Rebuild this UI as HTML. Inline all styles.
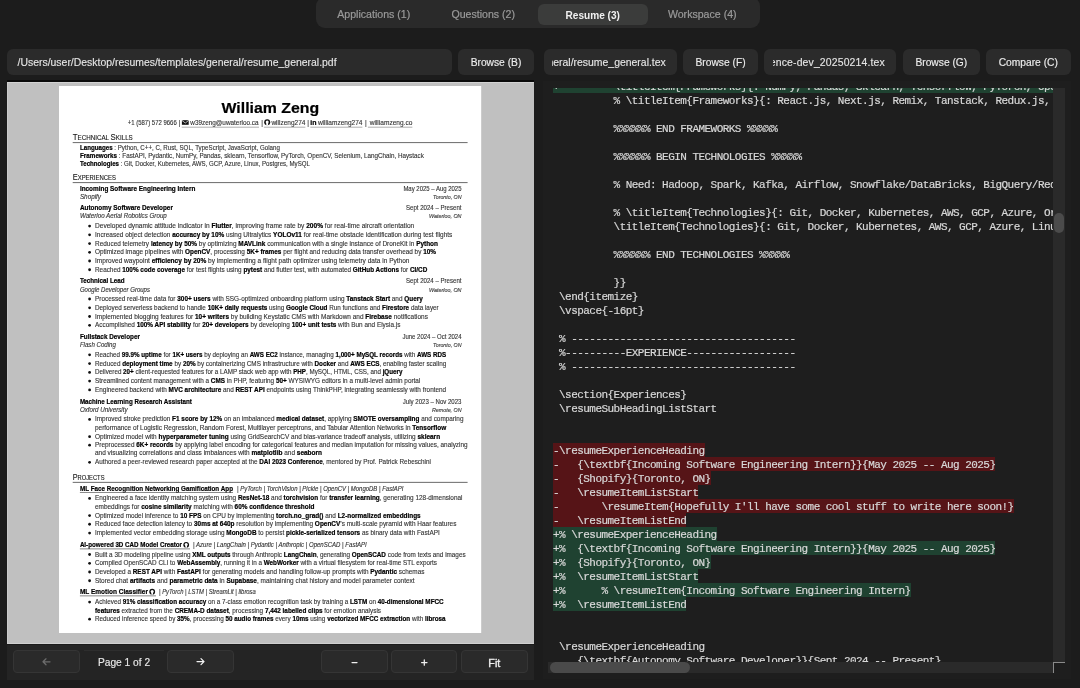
<!DOCTYPE html>
<html><head><meta charset="utf-8">
<style>
*{box-sizing:border-box;margin:0;padding:0}
html,body{width:1080px;height:688px;overflow:hidden;background:#1c1c1c;font-family:'Liberation Sans',sans-serif}
body>div{will-change:transform}
.abs{position:absolute}
#tabs{position:absolute;left:316px;top:-3.5px;width:444px;height:31px;background:#2a2a2a;border-radius:9px}
.tab{position:absolute;top:6.6px;height:21.8px;line-height:21.8px;width:109.5px;text-align:center;font-size:10.6px;color:#9a9a9a;-webkit-text-stroke:0.2px #9a9a9a}
.tab span{position:relative;top:0.6px}
.tab.act{background:#3b3c3b;color:#f0f0f0;border-radius:6px;font-weight:bold;font-size:10.1px;-webkit-text-stroke:0}
.tab.act span{top:1px}
.inp{position:absolute;top:49px;height:26px;background:#2b2b2b;border-radius:6px;overflow:hidden}
.clip{position:absolute;top:0;bottom:0;overflow:hidden}
.inp span{position:absolute;top:0.75px;line-height:26px;font-size:10.45px;color:#e6e6e6;white-space:nowrap;-webkit-text-stroke:0.12px #e6e6e6}
.btn{position:absolute;top:49px;height:26px;line-height:27.5px;background:#2b2b2b;border-radius:6px;text-align:center;font-size:10.25px;color:#ececec;-webkit-text-stroke:0.15px #ececec}
#lp{position:absolute;left:7px;top:80px;width:527px;height:2px;background:#0a0a0a}
#canvas{position:absolute;left:7px;top:81.6px;width:527px;height:562px;background:#c0c0c0;overflow:hidden;border-top:1.5px solid #d2d2d2;border-left:1px solid #cbcbcb;border-bottom:1px solid #cfcfcf}
#ctrl{position:absolute;left:7px;top:643.5px;width:527px;height:36px;background:#242424;border-top:1px solid #1a1a1a}
.cb{position:absolute;top:650.2px;height:23px;line-height:22px;border:1px solid #353535;background:#2a2a2a;border-radius:4px;text-align:center;color:#eee;font-size:10.5px}
#pglabel{position:absolute;left:83.75px;top:650px;width:80px;height:23px;line-height:23px;border-top:1px solid #2e2e2e;text-align:center;color:#e8e8e8;font-size:10.2px;-webkit-text-stroke:0.15px #e8e8e8}
#ed{position:absolute;left:543px;top:81px;width:527.6px;height:598.4px;background:#1e1e1e}
#view{position:absolute;left:553px;top:88px;width:501px;height:574px;overflow:hidden;will-change:transform}
#code{position:absolute;left:0;top:-9px;font-family:'Liberation Mono',monospace;font-size:11px;letter-spacing:-0.54px;line-height:14px;color:#d8d8d8;white-space:pre;-webkit-text-stroke:0.2px #d8d8d8}
.ln span.t{position:relative;top:0.5px}
.ln{height:14px;white-space:pre}
.add{background:#1f4231;display:inline-block;height:14px}
.del{background:#561417;display:inline-block;height:14px}
#vtrack{position:absolute;left:1053px;top:88px;width:12px;height:574px;background:#2a2a2a}
#vthumb{position:absolute;left:1054px;top:213px;width:10px;height:20px;background:#4b4b4b;border-radius:5px}
#htrack{position:absolute;left:548px;top:662px;width:505px;height:11px;background:#2a2a2a}
#hthumb{position:absolute;left:550px;top:662px;width:140px;height:11px;background:#4a4a4a;border-radius:5.5px}
#corner{position:absolute;left:1053px;top:662px;width:12px;height:11px;background:#1e1e1e;border-left:1.5px solid #8a8a8a;border-top:1.5px solid #8a8a8a}
svg text{font-family:'Liberation Sans',sans-serif;fill:#333;stroke:#333;stroke-width:0.12}
svg .b{font-weight:bold;fill:#000;stroke:#000;stroke-width:0.2}
svg .i{font-style:italic}
svg .h{fill:#111}
</style></head><body>
<div id="tabs">
 <div class="tab" style="left:3px"><span>Applications (1)</span></div>
 <div class="tab" style="left:112.5px"><span>Questions (2)</span></div>
 <div class="tab act" style="left:222px"><span>Resume (3)</span></div>
 <div class="tab" style="left:331.5px"><span>Workspace (4)</span></div>
</div>
<div class="inp" style="left:7px;width:445px"><span style="left:10.5px">/Users/user/Desktop/resumes/templates/general/resume_general.pdf</span></div>
<div class="btn" style="left:458px;width:76px">Browse (B)</div>
<div class="inp" style="left:543.6px;width:132.8px"><div class="clip" style="left:8.1px;right:11px"><span style="right:0">/Users/user/Desktop/resumes/templates/general/resume_general.tex</span></div></div>
<div class="btn" style="left:683px;width:75px">Browse (F)</div>
<div class="inp" style="left:764.4px;width:132.3px"><div class="clip" style="left:8.6px;right:11.5px"><span style="right:0;letter-spacing:0.14px">/Users/user/Desktop/resumes/versions/experience-dev_20250214.tex</span></div></div>
<div class="btn" style="left:903px;width:76.7px">Browse (G)</div>
<div class="btn" style="left:986px;width:84.5px">Compare (C)</div>

<div id="lp"></div>
<div id="canvas"></div>
<svg class="abs" style="left:0;top:0;will-change:transform" width="1080" height="688">
<rect x="59" y="86" width="422.2" height="547" fill="#fff"/>
<text x="221.5" y="113.2" font-size="15.2" textLength="97.6" lengthAdjust="spacingAndGlyphs" class="b">William Zeng</text>
<text x="127.80" y="124.70" font-size="6.6" textLength="48.90" lengthAdjust="spacingAndGlyphs">+1 (587) 572 9666</text>
<text x="178.7" y="124.9" font-size="6.6" fill="#999" stroke="none">|</text>
<text x="190.30" y="124.70" font-size="6.6" textLength="68.30" lengthAdjust="spacingAndGlyphs">w39zeng@uwaterloo.ca</text>
<text x="261.2" y="124.9" font-size="6.6" fill="#999" stroke="none">|</text>
<text x="271.40" y="124.70" font-size="6.6" textLength="34.00" lengthAdjust="spacingAndGlyphs">willzeng274</text>
<text x="307.3" y="124.9" font-size="6.6" fill="#999" stroke="none">|</text>
<text x="317.90" y="124.70" font-size="6.6" textLength="44.50" lengthAdjust="spacingAndGlyphs">williamzeng274</text>
<text x="365.0" y="124.9" font-size="6.6" fill="#999" stroke="none">|</text>
<text x="369.70" y="124.70" font-size="6.6" textLength="42.70" lengthAdjust="spacingAndGlyphs">williamzeng.co</text>
<line x1="181.7" y1="127.20" x2="259.0" y2="127.20" stroke="#777" stroke-width="0.6"/>
<line x1="263.9" y1="127.20" x2="305.4" y2="127.20" stroke="#777" stroke-width="0.6"/>
<line x1="310.3" y1="127.20" x2="362.4" y2="127.20" stroke="#777" stroke-width="0.6"/>
<line x1="367.9" y1="127.20" x2="412.4" y2="127.20" stroke="#777" stroke-width="0.6"/>
<rect x="181.9" y="120.2" width="6.8" height="4.6" fill="#111"/><path d="M181.9 120.4 L185.3 123 L188.7 120.4" stroke="#fff" stroke-width="0.7" fill="none"/>
<circle cx="267.2" cy="122.3" r="3.0" fill="#111"/><circle cx="267.2" cy="122.0" r="1.5" fill="#fff"/><rect x="266.3" y="123" width="1.8" height="2.4" fill="#fff"/>
<text x="310.3" y="124.8" font-size="6.6" class="b" textLength="6.2" lengthAdjust="spacingAndGlyphs">in</text>
<text x="72.7" y="139.70" textLength="60.10" lengthAdjust="spacingAndGlyphs" class="h"><tspan font-size="8.2">T</tspan><tspan font-size="6.5">ECHNICAL</tspan><tspan font-size="6.5"> </tspan><tspan font-size="8.2">S</tspan><tspan font-size="6.5">KILLS</tspan></text>
<line x1="72.7" y1="142.60" x2="467.6" y2="142.60" stroke="#6a6a6a" stroke-width="1.0"/>
<text x="80.00" y="149.90" font-size="6.7" textLength="199.90" lengthAdjust="spacingAndGlyphs"><tspan class="b">Languages</tspan> : Python, C++, C, Rust, SQL, TypeScript, JavaScript, Golang</text>
<text x="80.00" y="157.90" font-size="6.7" textLength="343.80" lengthAdjust="spacingAndGlyphs"><tspan class="b">Frameworks</tspan> : FastAPI, Pydantic, NumPy, Pandas, sklearn, Tensorflow, PyTorch, OpenCV, Selenium, LangChain, Haystack</text>
<text x="80.00" y="165.90" font-size="6.7" textLength="229.90" lengthAdjust="spacingAndGlyphs"><tspan class="b">Technologies</tspan> : Git, Docker, Kubernetes, AWS, GCP, Azure, Linux, Postgres, MySQL</text>
<text x="72.7" y="179.90" textLength="43.30" lengthAdjust="spacingAndGlyphs" class="h"><tspan font-size="8.2">E</tspan><tspan font-size="6.5">XPERIENCES</tspan></text>
<line x1="72.7" y1="182.60" x2="467.6" y2="182.60" stroke="#6a6a6a" stroke-width="1.0"/>
<text x="79.90" y="190.80" font-size="6.9" textLength="115.40" lengthAdjust="spacingAndGlyphs"><tspan class="b">Incoming Software Engineering Intern</tspan></text>
<text x="403.40" y="190.80" font-size="6.5" textLength="58.10" lengthAdjust="spacingAndGlyphs">May 2025 – Aug 2025</text>
<text x="79.90" y="198.91" font-size="6.6" textLength="21.10" lengthAdjust="spacingAndGlyphs"><tspan class="i">Shopify</tspan></text>
<text x="433.00" y="198.91" font-size="6.0" textLength="28.50" lengthAdjust="spacingAndGlyphs"><tspan class="i">Toronto, ON</tspan></text>
<text x="79.90" y="210.13" font-size="6.9" textLength="93.00" lengthAdjust="spacingAndGlyphs"><tspan class="b">Autonomy Software Developer</tspan></text>
<text x="406.00" y="210.13" font-size="6.5" textLength="55.50" lengthAdjust="spacingAndGlyphs">Sept 2024 – Present</text>
<text x="79.90" y="217.84" font-size="6.6" textLength="86.90" lengthAdjust="spacingAndGlyphs"><tspan class="i">Waterloo Aerial Robotics Group</tspan></text>
<text x="429.00" y="217.84" font-size="6.0" textLength="32.50" lengthAdjust="spacingAndGlyphs"><tspan class="i">Waterloo, ON</tspan></text>
<circle cx="89.6" cy="226.06" r="1.4" fill="#111" stroke="none"/>
<text x="95.00" y="228.06" font-size="6.7" textLength="319.20" lengthAdjust="spacingAndGlyphs">Developed dynamic attitude indicator in <tspan class="b">Flutter</tspan>, improving frame rate by <tspan class="b">200%</tspan> for real-time aircraft orientation</text>
<circle cx="89.6" cy="234.87" r="1.4" fill="#111" stroke="none"/>
<text x="95.00" y="236.88" font-size="6.7" textLength="357.30" lengthAdjust="spacingAndGlyphs">Increased object detection <tspan class="b">accuracy by 10%</tspan> using Ultralytics <tspan class="b">YOLOv11</tspan> for real-time obstacle identification during test flights</text>
<circle cx="89.6" cy="243.59" r="1.4" fill="#111" stroke="none"/>
<text x="95.00" y="245.59" font-size="6.7" textLength="343.00" lengthAdjust="spacingAndGlyphs">Reduced telemetry <tspan class="b">latency by 50%</tspan> by optimizing <tspan class="b">MAVLink</tspan> communication with a single instance of DroneKit in <tspan class="b">Python</tspan></text>
<circle cx="89.6" cy="252.30" r="1.4" fill="#111" stroke="none"/>
<text x="95.00" y="254.30" font-size="6.7" textLength="341.00" lengthAdjust="spacingAndGlyphs">Optimized image pipelines with <tspan class="b">OpenCV</tspan>, processing <tspan class="b">5K+ frames</tspan> per flight and reducing data transfer overhead by <tspan class="b">10%</tspan></text>
<circle cx="89.6" cy="261.01" r="1.4" fill="#111" stroke="none"/>
<text x="95.00" y="263.02" font-size="6.7" textLength="314.50" lengthAdjust="spacingAndGlyphs">Improved waypoint <tspan class="b">efficiency by 20%</tspan> by implementing a flight path optimizer using telemetry data in Python</text>
<circle cx="89.6" cy="269.73" r="1.4" fill="#111" stroke="none"/>
<text x="95.00" y="271.73" font-size="6.7" textLength="332.30" lengthAdjust="spacingAndGlyphs">Reached <tspan class="b">100% code coverage</tspan> for test flights using <tspan class="b">pytest</tspan> and flutter test, with automated <tspan class="b">GitHub Actions</tspan> for <tspan class="b">CI/CD</tspan></text>
<text x="79.90" y="283.05" font-size="6.9" textLength="44.70" lengthAdjust="spacingAndGlyphs"><tspan class="b">Technical Lead</tspan></text>
<text x="406.00" y="283.05" font-size="6.5" textLength="55.50" lengthAdjust="spacingAndGlyphs">Sept 2024 – Present</text>
<text x="79.90" y="292.47" font-size="6.6" textLength="70.10" lengthAdjust="spacingAndGlyphs"><tspan class="i">Google Developer Groups</tspan></text>
<text x="429.00" y="292.47" font-size="6.0" textLength="32.50" lengthAdjust="spacingAndGlyphs"><tspan class="i">Waterloo, ON</tspan></text>
<circle cx="89.6" cy="298.98" r="1.4" fill="#111" stroke="none"/>
<text x="95.00" y="300.98" font-size="6.7" textLength="327.80" lengthAdjust="spacingAndGlyphs">Processed real-time data for <tspan class="b">300+ users</tspan> with SSG-optimized onboarding platform using <tspan class="b">Tanstack Start</tspan> and <tspan class="b">Query</tspan></text>
<circle cx="89.6" cy="307.79" r="1.4" fill="#111" stroke="none"/>
<text x="95.00" y="309.79" font-size="6.7" textLength="343.70" lengthAdjust="spacingAndGlyphs">Deployed serverless backend to handle <tspan class="b">10K+ daily requests</tspan> using <tspan class="b">Google Cloud</tspan> Run functions and <tspan class="b">Firestore</tspan> data layer</text>
<circle cx="89.6" cy="316.51" r="1.4" fill="#111" stroke="none"/>
<text x="95.00" y="318.51" font-size="6.7" textLength="332.90" lengthAdjust="spacingAndGlyphs">Implemented blogging features for <tspan class="b">10+ writers</tspan> by building Keystatic CMS with Markdown and <tspan class="b">Firebase</tspan> notifications</text>
<circle cx="89.6" cy="325.32" r="1.4" fill="#111" stroke="none"/>
<text x="95.00" y="327.32" font-size="6.7" textLength="305.40" lengthAdjust="spacingAndGlyphs">Accomplished <tspan class="b">100% API stability</tspan> for <tspan class="b">20+ developers</tspan> by developing <tspan class="b">100+ unit tests</tspan> with Bun and Elysia.js</text>
<text x="79.90" y="339.14" font-size="6.9" textLength="60.00" lengthAdjust="spacingAndGlyphs"><tspan class="b">Fullstack Developer</tspan></text>
<text x="402.40" y="339.14" font-size="6.5" textLength="59.10" lengthAdjust="spacingAndGlyphs">June 2024 – Oct 2024</text>
<text x="79.90" y="346.95" font-size="6.6" textLength="35.90" lengthAdjust="spacingAndGlyphs"><tspan class="i">Flash Coding</tspan></text>
<text x="433.00" y="346.95" font-size="6.0" textLength="28.50" lengthAdjust="spacingAndGlyphs"><tspan class="i">Toronto, ON</tspan></text>
<circle cx="89.6" cy="354.87" r="1.4" fill="#111" stroke="none"/>
<text x="95.00" y="356.87" font-size="6.7" textLength="351.20" lengthAdjust="spacingAndGlyphs">Reached <tspan class="b">99.9% uptime</tspan> for <tspan class="b">1K+ users</tspan> by deploying an <tspan class="b">AWS EC2</tspan> instance, managing <tspan class="b">1,000+ MySQL records</tspan> with <tspan class="b">AWS RDS</tspan></text>
<circle cx="89.6" cy="363.58" r="1.4" fill="#111" stroke="none"/>
<text x="95.00" y="365.58" font-size="6.7" textLength="351.20" lengthAdjust="spacingAndGlyphs">Reduced <tspan class="b">deployment time</tspan> by <tspan class="b">20%</tspan> by containerizing CMS infrastructure with <tspan class="b">Docker</tspan> and <tspan class="b">AWS ECS</tspan>, enabling faster scaling</text>
<circle cx="89.6" cy="372.40" r="1.4" fill="#111" stroke="none"/>
<text x="95.00" y="374.40" font-size="6.7" textLength="307.40" lengthAdjust="spacingAndGlyphs">Delivered <tspan class="b">20+</tspan> client-requested features for a LAMP stack web app with <tspan class="b">PHP</tspan>, MySQL, HTML, CSS, and <tspan class="b">jQuery</tspan></text>
<circle cx="89.6" cy="381.11" r="1.4" fill="#111" stroke="none"/>
<text x="95.00" y="383.11" font-size="6.7" textLength="325.30" lengthAdjust="spacingAndGlyphs">Streamlined content management with a <tspan class="b">CMS</tspan> in PHP, featuring <tspan class="b">50+</tspan> WYSIWYG editors in a multi-level admin portal</text>
<circle cx="89.6" cy="389.92" r="1.4" fill="#111" stroke="none"/>
<text x="95.00" y="391.93" font-size="6.7" textLength="351.20" lengthAdjust="spacingAndGlyphs">Engineered backend with <tspan class="b">MVC architecture</tspan> and <tspan class="b">REST API</tspan> endpoints using ThinkPHP, integrating seamlessly with frontend</text>
<text x="79.90" y="403.65" font-size="6.9" textLength="111.90" lengthAdjust="spacingAndGlyphs"><tspan class="b">Machine Learning Research Assistant</tspan></text>
<text x="402.80" y="403.65" font-size="6.5" textLength="58.70" lengthAdjust="spacingAndGlyphs">July 2023 – Nov 2023</text>
<text x="79.90" y="411.56" font-size="6.6" textLength="47.70" lengthAdjust="spacingAndGlyphs"><tspan class="i">Oxford University</tspan></text>
<text x="432.00" y="411.56" font-size="6.0" textLength="29.50" lengthAdjust="spacingAndGlyphs"><tspan class="i">Remote, ON</tspan></text>
<circle cx="89.6" cy="419.47" r="1.4" fill="#111" stroke="none"/>
<text x="95.00" y="421.48" font-size="6.7" textLength="368.50" lengthAdjust="spacingAndGlyphs">Improved stroke prediction <tspan class="b">F1 score by 12%</tspan> on an imbalanced <tspan class="b">medical dataset</tspan>, applying <tspan class="b">SMOTE oversampling</tspan> and comparing</text>
<text x="95.00" y="429.69" font-size="6.7" textLength="351.20" lengthAdjust="spacingAndGlyphs">performance of Logistic Regression, Random Forest, Multilayer perceptrons, and Tabular Attention Networks in <tspan class="b">Tensorflow</tspan></text>
<circle cx="89.6" cy="436.70" r="1.4" fill="#111" stroke="none"/>
<text x="95.00" y="438.70" font-size="6.7" textLength="345.10" lengthAdjust="spacingAndGlyphs">Optimized model with <tspan class="b">hyperparameter tuning</tspan> using GridSearchCV and bias-variance tradeoff analysis, utilizing <tspan class="b">sklearn</tspan></text>
<circle cx="89.6" cy="445.21" r="1.4" fill="#111" stroke="none"/>
<text x="95.00" y="447.22" font-size="6.7" textLength="372.60" lengthAdjust="spacingAndGlyphs">Preprocessed <tspan class="b">6K+ records</tspan> by applying label encoding for categorical features and median imputation for missing values, analyzing</text>
<text x="95.00" y="455.43" font-size="6.7" textLength="227.00" lengthAdjust="spacingAndGlyphs">and visualizing correlations and class imbalances with <tspan class="b">matplotlib</tspan> and <tspan class="b">seaborn</tspan></text>
<circle cx="89.6" cy="462.34" r="1.4" fill="#111" stroke="none"/>
<text x="95.00" y="464.35" font-size="6.7" textLength="335.90" lengthAdjust="spacingAndGlyphs">Authored a peer-reviewed research paper accepted at the <tspan class="b">DAI 2023 Conference</tspan>, mentored by Prof. Patrick Rebeschini</text>
<text x="72.7" y="480.37" textLength="31.80" lengthAdjust="spacingAndGlyphs" class="h"><tspan font-size="8.2">P</tspan><tspan font-size="6.5">ROJECTS</tspan></text>
<line x1="72.7" y1="482.37" x2="467.6" y2="482.37" stroke="#6a6a6a" stroke-width="1.0"/>
<text x="79.90" y="490.79" font-size="6.9" textLength="153.10" lengthAdjust="spacingAndGlyphs"><tspan class="b">ML Face Recognition Networking Gamification App</tspan></text>
<line x1="79.9" y1="492.49" x2="233.0" y2="492.49" stroke="#555" stroke-width="0.7"/>
<text x="237.00" y="490.79" font-size="6.6" textLength="166.40" lengthAdjust="spacingAndGlyphs" class="i">| <tspan class="i">PyTorch</tspan> | <tspan class="i">TorchVision</tspan> | <tspan class="i">Pickle</tspan> | <tspan class="i">OpenCV</tspan> | <tspan class="i">MongoDB</tspan> | <tspan class="i">FastAPI</tspan></text>
<circle cx="89.6" cy="498.40" r="1.4" fill="#111" stroke="none"/>
<text x="95.00" y="500.40" font-size="6.7" textLength="367.50" lengthAdjust="spacingAndGlyphs">Engineered a face identity matching system using <tspan class="b">ResNet-18</tspan> and <tspan class="b">torchvision</tspan> for <tspan class="b">transfer learning</tspan>, generating 128-dimensional</text>
<text x="95.00" y="508.52" font-size="6.7" textLength="219.40" lengthAdjust="spacingAndGlyphs">embeddings for <tspan class="b">cosine similarity</tspan> matching with <tspan class="b">60% confidence threshold</tspan></text>
<circle cx="89.6" cy="515.53" r="1.4" fill="#111" stroke="none"/>
<text x="95.00" y="517.53" font-size="6.7" textLength="325.70" lengthAdjust="spacingAndGlyphs">Optimized model inference to <tspan class="b">10 FPS</tspan> on CPU by implementing <tspan class="b">torch.no_grad()</tspan> and <tspan class="b">L2-normalized embeddings</tspan></text>
<circle cx="89.6" cy="524.24" r="1.4" fill="#111" stroke="none"/>
<text x="95.00" y="526.25" font-size="6.7" textLength="361.40" lengthAdjust="spacingAndGlyphs">Reduced face detection latency to <tspan class="b">30ms at 640p</tspan> resolution by implementing <tspan class="b">OpenCV</tspan>’s multi-scale pyramid with Haar features</text>
<circle cx="89.6" cy="533.06" r="1.4" fill="#111" stroke="none"/>
<text x="95.00" y="535.06" font-size="6.7" textLength="344.70" lengthAdjust="spacingAndGlyphs">Implemented vector embedding storage using <tspan class="b">MongoDB</tspan> to persist <tspan class="b">pickle-serialized tensors</tspan> as binary data with FastAPI</text>
<text x="79.90" y="547.18" font-size="6.9" textLength="102.10" lengthAdjust="spacingAndGlyphs"><tspan class="b">AI-powered 3D CAD Model Creator</tspan></text>
<line x1="79.9" y1="548.88" x2="190.0" y2="548.88" stroke="#555" stroke-width="0.7"/>
<circle cx="186.2" cy="544.78" r="2.9" fill="#111" stroke="none"/><circle cx="186.2" cy="544.58" r="1.5" fill="#fff" stroke="none"/><rect x="185.39999999999998" y="545.28" width="1.6" height="2.4" fill="#fff" stroke="none"/>
<text x="193.00" y="547.18" font-size="6.6" textLength="173.80" lengthAdjust="spacingAndGlyphs" class="i">| <tspan class="i">Azure</tspan> | <tspan class="i">LangChain</tspan> | <tspan class="i">Pydantic</tspan> | <tspan class="i">Anthropic</tspan> | <tspan class="i">OpenSCAD</tspan> | <tspan class="i">FastAPI</tspan></text>
<circle cx="89.6" cy="554.49" r="1.4" fill="#111" stroke="none"/>
<text x="95.00" y="556.50" font-size="6.7" textLength="370.60" lengthAdjust="spacingAndGlyphs">Built a 3D modeling pipeline using <tspan class="b">XML outputs</tspan> through Anthropic <tspan class="b">LangChain</tspan>, generating <tspan class="b">OpenSCAD</tspan> code from texts and images</text>
<circle cx="89.6" cy="563.31" r="1.4" fill="#111" stroke="none"/>
<text x="95.00" y="565.31" font-size="6.7" textLength="342.00" lengthAdjust="spacingAndGlyphs">Compiled OpenSCAD CLI to <tspan class="b">WebAssembly</tspan>, running it in a <tspan class="b">WebWorker</tspan> with a virtual filesystem for real-time STL exports</text>
<circle cx="89.6" cy="572.02" r="1.4" fill="#111" stroke="none"/>
<text x="95.00" y="574.02" font-size="6.7" textLength="329.40" lengthAdjust="spacingAndGlyphs">Developed a <tspan class="b">REST API</tspan> with <tspan class="b">FastAPI</tspan> for generating models and handling follow-up prompts with <tspan class="b">Pydantic</tspan> schemas</text>
<circle cx="89.6" cy="580.73" r="1.4" fill="#111" stroke="none"/>
<text x="95.00" y="582.74" font-size="6.7" textLength="319.60" lengthAdjust="spacingAndGlyphs">Stored chat <tspan class="b">artifacts</tspan> and <tspan class="b">parametric data</tspan> in <tspan class="b">Supabase</tspan>, maintaining chat history and model parameter context</text>
<text x="79.90" y="594.16" font-size="6.9" textLength="68.10" lengthAdjust="spacingAndGlyphs"><tspan class="b">ML Emotion Classifier</tspan></text>
<line x1="79.9" y1="595.86" x2="156.0" y2="595.86" stroke="#555" stroke-width="0.7"/>
<circle cx="152.2" cy="591.76" r="2.9" fill="#111" stroke="none"/><circle cx="152.2" cy="591.56" r="1.5" fill="#fff" stroke="none"/><rect x="151.39999999999998" y="592.26" width="1.6" height="2.4" fill="#fff" stroke="none"/>
<text x="159.00" y="594.16" font-size="6.6" textLength="96.80" lengthAdjust="spacingAndGlyphs" class="i">| <tspan class="i">PyTorch</tspan> | <tspan class="i">LSTM</tspan> | <tspan class="i">StreamLit</tspan> | <tspan class="i">librosa</tspan></text>
<circle cx="89.6" cy="602.07" r="1.4" fill="#111" stroke="none"/>
<text x="95.00" y="604.07" font-size="6.7" textLength="348.60" lengthAdjust="spacingAndGlyphs">Achieved <tspan class="b">91% classification accuracy</tspan> on a 7-class emotion recognition task by training a <tspan class="b">LSTM</tspan> on <tspan class="b">40-dimensional MFCC</tspan></text>
<text x="95.00" y="612.59" font-size="6.7" textLength="286.00" lengthAdjust="spacingAndGlyphs"><tspan class="b">features</tspan> extracted from the <tspan class="b">CREMA-D dataset</tspan>, processing <tspan class="b">7,442 labelled clips</tspan> for emotion analysis</text>
<circle cx="89.6" cy="619.20" r="1.4" fill="#111" stroke="none"/>
<text x="95.00" y="621.20" font-size="6.7" textLength="350.60" lengthAdjust="spacingAndGlyphs">Reduced inference speed by <tspan class="b">35%</tspan>, processing <tspan class="b">50 audio frames</tspan> every <tspan class="b">10ms</tspan> using <tspan class="b">vectorized MFCC extraction</tspan> with <tspan class="b">librosa</tspan></text>
</svg>
<div id="ctrl"></div>
<div class="cb" style="left:13px;width:66.5px"></div>
<div id="pglabel">Page 1 of 2</div>
<div class="cb" style="left:167.3px;width:66.5px"></div>
<div class="cb" style="left:321.3px;width:66.5px"></div>
<div class="cb" style="left:391.3px;width:66.4px"></div>
<div class="cb" style="left:461.3px;width:66.7px;font-size:10.8px;-webkit-text-stroke:0.35px #eee"><span style="position:relative;top:0.5px">Fit</span></div>
<svg class="abs" style="left:0;top:640px" width="540" height="40" fill="none" stroke-linecap="round" stroke-linejoin="round">
<path d="M43.2 21.8 H50 M46 18.8 L43 21.8 L46 24.8" stroke="#6c6c6c" stroke-width="1.25"/>
<path d="M197 21.6 H204 M201 18.6 L204 21.6 L201 24.6" stroke="#f2f2f2" stroke-width="1.25"/>
<path d="M352 22.5 H357" stroke="#f0f0f0" stroke-width="1.25"/>
<path d="M421.6 22.5 H427 M424.3 19.8 V25.2" stroke="#f0f0f0" stroke-width="1.25"/>
</svg>

<div id="ed"></div>
<div id="view"><div id="code"><div class="ln"><span class="add"><span class="t">+         \titleItem{Frameworks}{: NumPy, Pandas, Sklearn, Tensorflow, PyTorch, OpenCV, Selenium}</span></span></div><div class="ln"><span class="t">          % \titleItem{Frameworks}{: React.js, Next.js, Remix, Tanstack, Redux.js, Express.js}</span></div><div class="ln"><span class="t">&#8203;</span></div><div class="ln"><span class="t">          %%%%%% END FRAMEWORKS %%%%%</span></div><div class="ln"><span class="t">&#8203;</span></div><div class="ln"><span class="t">          %%%%%% BEGIN TECHNOLOGIES %%%%%</span></div><div class="ln"><span class="t">&#8203;</span></div><div class="ln"><span class="t">          % Need: Hadoop, Spark, Kafka, Airflow, Snowflake/DataBricks, BigQuery/Redshift</span></div><div class="ln"><span class="t">&#8203;</span></div><div class="ln"><span class="t">          % \titleItem{Technologies}{: Git, Docker, Kubernetes, AWS, GCP, Azure, Oracle}</span></div><div class="ln"><span class="t">          \titleItem{Technologies}{: Git, Docker, Kubernetes, AWS, GCP, Azure, Linux, Postgres}</span></div><div class="ln"><span class="t">&#8203;</span></div><div class="ln"><span class="t">          %%%%%% END TECHNOLOGIES %%%%%</span></div><div class="ln"><span class="t">&#8203;</span></div><div class="ln"><span class="t">          }}</span></div><div class="ln"><span class="t"> \end{itemize}</span></div><div class="ln"><span class="t"> \vspace{-16pt}</span></div><div class="ln"><span class="t">&#8203;</span></div><div class="ln"><span class="t"> % -------------------------------------</span></div><div class="ln"><span class="t"> %----------EXPERIENCE------------------</span></div><div class="ln"><span class="t"> % -------------------------------------</span></div><div class="ln"><span class="t">&#8203;</span></div><div class="ln"><span class="t"> \section{Experiences}</span></div><div class="ln"><span class="t"> \resumeSubHeadingListStart</span></div><div class="ln"><span class="t">&#8203;</span></div><div class="ln"><span class="t">&#8203;</span></div><div class="ln"><span class="del"><span class="t">-\resumeExperienceHeading</span></span></div><div class="ln"><span class="del"><span class="t">-   {\textbf{Incoming Software Engineering Intern}}{May 2025 -- Aug 2025}</span></span></div><div class="ln"><span class="del"><span class="t">-   {Shopify}{Toronto, ON}</span></span></div><div class="ln"><span class="del"><span class="t">-   \resumeItemListStart</span></span></div><div class="ln"><span class="del"><span class="t">-       \resumeItem{Hopefully I&#x27;ll have some cool stuff to write here soon!}</span></span></div><div class="ln"><span class="del"><span class="t">-   \resumeItemListEnd</span></span></div><div class="ln"><span class="add"><span class="t">+% \resumeExperienceHeading</span></span></div><div class="ln"><span class="add"><span class="t">+%  {\textbf{Incoming Software Engineering Intern}}{May 2025 -- Aug 2025}</span></span></div><div class="ln"><span class="add"><span class="t">+%  {Shopify}{Toronto, ON}</span></span></div><div class="ln"><span class="add"><span class="t">+%  \resumeItemListStart</span></span></div><div class="ln"><span class="add"><span class="t">+%      % \resumeItem{Incoming Software Engineering Intern}</span></span></div><div class="ln"><span class="add"><span class="t">+%  \resumeItemListEnd</span></span></div><div class="ln"><span class="t">&#8203;</span></div><div class="ln"><span class="t">&#8203;</span></div><div class="ln"><span class="t"> \resumeExperienceHeading</span></div><div class="ln"><span class="t">    {\textbf{Autonomy Software Developer}}{Sept 2024 -- Present}</span></div></div></div>
<div id="vtrack"></div>
<div id="vthumb"></div>
<div id="htrack"></div>
<div id="hthumb"></div>
<div id="corner"></div>
</body></html>
